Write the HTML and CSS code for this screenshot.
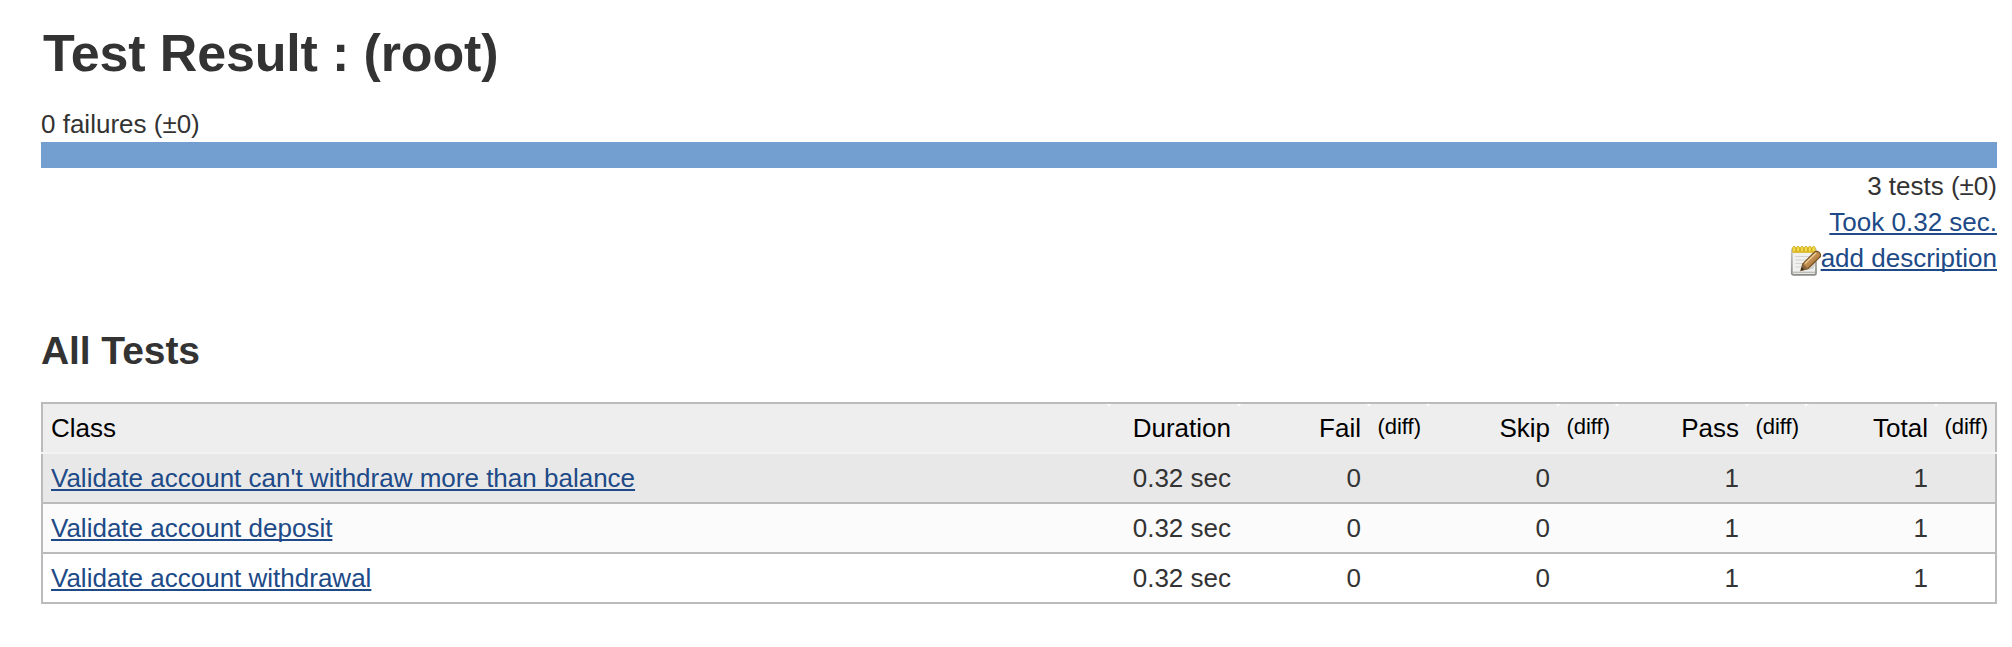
FILE: index.html
```html
<!DOCTYPE html>
<html lang="en">
<head>
<meta charset="utf-8">
<title>Test Result : (root)</title>
<link rel="stylesheet" href="styles.css">
</head>
<body>
<main class="panel">
  <h1 class="title">Test Result : (root)</h1>
  <div class="failures">0 failures (±0)</div>
  <div class="bar"></div>
  <div class="summary">
    <div>3 tests (±0)</div>
    <div><a href="#">Took 0.32 sec.</a></div>
    <div class="describe"><svg class="notepad" viewBox="0 0 32 32" aria-hidden="true">
      <defs>
        <linearGradient id="edge" x1="0" y1="0" x2="0" y2="1"><stop offset="0" stop-color="#c9c9c4"/><stop offset="1" stop-color="#8b8c88"/></linearGradient>
        <linearGradient id="wood" x1="0" y1="0" x2="1" y2="1"><stop offset="0" stop-color="#dfb274"/><stop offset=".5" stop-color="#c08d50"/><stop offset="1" stop-color="#7c5320"/></linearGradient>
      </defs>
      <rect x="2.8" y="4.6" width="24.2" height="26.2" rx="1.8" fill="#f0f0ee" stroke="url(#edge)" stroke-width="1.8"/>
      <path d="M3.8 28.4h22.2" stroke="#bcbcb8" stroke-width="1.6"/>
      <path d="M6.5 12.5h16M6.5 16h12M6.5 19.5h8M6.5 23h6" stroke="#d2d2cf" stroke-width="1.2"/>
      <path d="M3.5 4.2h22.5v4.6H3.5z" fill="#dfba20"/>
      <g fill="#f1dc50" stroke="#cfa616" stroke-width=".8">
        <ellipse cx="5.2" cy="5.3" rx="1.7" ry="3"/><ellipse cx="9.1" cy="5.3" rx="1.7" ry="3"/><ellipse cx="13" cy="5.3" rx="1.7" ry="3"/><ellipse cx="16.9" cy="5.3" rx="1.7" ry="3"/><ellipse cx="20.8" cy="5.3" rx="1.7" ry="3"/><ellipse cx="24.6" cy="5.3" rx="1.7" ry="3"/>
      </g>
      <path d="M12 26.8l12-1.8 3-6v-4z" fill="#888" opacity=".3"/>
      <path d="M13.8 19.8L25.6 8q2.4-1.5 4.7.6 2.2 2.1.8 4.3L18.8 24.6l-6.8 1.9z" fill="url(#wood)" stroke="#76501f" stroke-width="1.2"/>
      <path d="M13.8 19.8l5 4.8-6.8 1.9z" fill="#85653e"/>
      <path d="M12.9 23.2l2.2 2.2-3.3 1.1z" fill="#2c241c"/>
      <path d="M16 19.4L27.2 8.8" stroke="#edcb96" stroke-width="1.4"/>
    </svg><a href="#">add description</a></div>
  </div>
  <h2 class="subtitle">All Tests</h2>
  <table class="results">
    <colgroup><col><col class="num"><col class="num"><col class="dif"><col class="num"><col class="dif"><col class="num"><col class="dif"><col class="num"><col class="last"></colgroup>
    <thead>
      <tr><th class="name">Class</th><th>Duration</th><th>Fail</th><th class="small">(diff)</th><th>Skip</th><th class="small">(diff)</th><th>Pass</th><th class="small">(diff)</th><th>Total</th><th class="small">(diff)</th></tr>
    </thead>
    <tbody>
      <tr class="hover"><td class="name"><a href="#">Validate account can't withdraw more than balance</a></td><td>0.32 sec</td><td>0</td><td></td><td>0</td><td></td><td>1</td><td></td><td>1</td><td></td></tr>
      <tr class="odd"><td class="name"><a href="#">Validate account deposit</a></td><td>0.32 sec</td><td>0</td><td></td><td>0</td><td></td><td>1</td><td></td><td>1</td><td></td></tr>
      <tr><td class="name"><a href="#">Validate account withdrawal</a></td><td>0.32 sec</td><td>0</td><td></td><td>0</td><td></td><td>1</td><td></td><td>1</td><td></td></tr>
    </tbody>
  </table>
</main>
</body>
</html>
```
FILE: styles.css
```css
body {
  margin: 0;
  background: #fff;
  color: #333;
  font: 26px/36px "Liberation Sans", Arial, Helvetica, sans-serif;
}
.panel {
  padding: 22px 15px 0 41px;
}
.title {
  margin: 0;
  padding-left: 2px;
  font-size: 52px;
  line-height: 62px;
  letter-spacing: -0.15px;
}
.failures {
  margin-top: 22px;
}
.bar {
  height: 26px;
  background: #729fcf;
}
.summary {
  text-align: right;
}
a {
  color: #204a87;
  text-decoration: underline;
  text-decoration-thickness: 2px;
  text-underline-offset: 2px;
  text-decoration-skip-ink: none;
}
.describe {
  display: flex;
  justify-content: flex-end;
}
.notepad {
  width: 32px;
  height: 32px;
  margin-top: 4px;
}
.subtitle {
  margin: 52px 0 28px;
  font-size: 39px;
  line-height: 46px;
  letter-spacing: -0.08px;
}
.results {
  width: 100%;
  table-layout: fixed;
  border-collapse: separate;
  border-spacing: 0;
  border-top: 2px solid #bbb;
}
.num { width: 130px; }
.dif { width: 59px; }
.last { width: 61px; }
th, td {
  box-sizing: border-box;
  height: 50px;
  padding: 6px 8px 6px 0;
  border-bottom: 2px solid #bbb;
  text-align: right;
  vertical-align: middle;
  white-space: nowrap;
}
th {
  background: #eee;
  border-bottom-color: #f3f3f3;
  border-radius: 4px 4px 0 0;
  color: #000;
  font-weight: normal;
}
.name {
  padding-left: 10px;
  text-align: left;
}
th.name {
  border-top-left-radius: 0;
}
th.small {
  padding: 5px 7px 7px 0;
  font-size: 22px;
}
tr > :first-child {
  box-shadow: inset 2px 0 #bbb;
}
tr > :last-child {
  border-top-right-radius: 0;
  box-shadow: inset -2px 0 #bbb;
}
tr > .small:last-child {
  padding-right: 9px;
}
.hover { background: #e8e8e8; }
.odd { background: #fbfbfb; }
```
